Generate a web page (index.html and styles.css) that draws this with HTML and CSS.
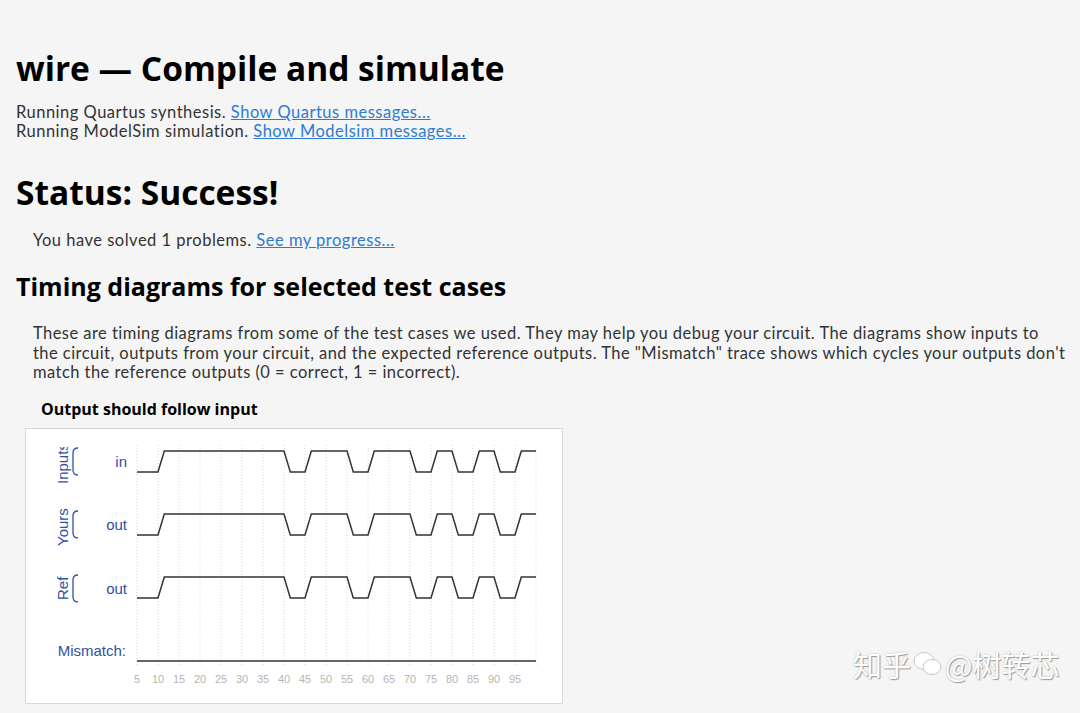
FILE: index.html
```html
<!DOCTYPE html>
<html lang="en">

<head>
    <meta charset="UTF-8">
    <title>wire — Compile and simulate</title>
    <link rel="stylesheet" href="styles.css">
</head>

<body>

    <h1 class="title">wire — Compile and simulate</h1>
    <p class="runs">
        Running Quartus synthesis. <a href="#">Show Quartus messages...</a><br>
        Running ModelSim simulation. <a href="#">Show Modelsim messages...</a>
    </p>

    <h1 class="status">Status: Success!</h1>
    <div class="indent">
        <p class="solved">You have solved 1 problems. <a href="#">See my progress...</a></p>
    </div>

    <h2>Timing diagrams for selected test cases</h2>
    <div class="indent">
        <p class="about">These are timing diagrams from some of the test cases we used. They may help you debug your circuit. The diagrams show inputs to<br>the circuit, outputs from your circuit, and the expected reference outputs. The "Mismatch" trace shows which cycles your outputs don't match the reference outputs (0 = correct, 1 = incorrect).</p>
    </div>

    <div class="figure">
        <h3>Output should follow input</h3>
        <div class="wave-box">
            <svg width="536" height="274" viewBox="0 0 536 274">
                <defs>
                    <clipPath id="labelClip">
                        <rect x="0" y="18" width="110" height="256"></rect>
                    </clipPath>
                    <path id="wave" d="M111,21 L132,21 L138.3,0 L258,0 L264.3,21 L279,21 L285.3,0 L321,0 L327.3,21 L342,21 L348.3,0 L384,0 L390.3,21 L405,21 L411.3,0 L426,0 L432.3,21 L447,21 L453.3,0 L468,0 L474.3,21 L489,21 L495.3,0 L510,0"></path>
                </defs>

                <!-- grid, one line every 5 cycles -->
                <g class="grid">
                    <line x1="111" y1="16" x2="111" y2="237"></line>
                    <line x1="132" y1="16" x2="132" y2="237"></line>
                    <line x1="153" y1="16" x2="153" y2="237"></line>
                    <line x1="174" y1="16" x2="174" y2="237"></line>
                    <line x1="195" y1="16" x2="195" y2="237"></line>
                    <line x1="216" y1="16" x2="216" y2="237"></line>
                    <line x1="237" y1="16" x2="237" y2="237"></line>
                    <line x1="258" y1="16" x2="258" y2="237"></line>
                    <line x1="279" y1="16" x2="279" y2="237"></line>
                    <line x1="300" y1="16" x2="300" y2="237"></line>
                    <line x1="321" y1="16" x2="321" y2="237"></line>
                    <line x1="342" y1="16" x2="342" y2="237"></line>
                    <line x1="363" y1="16" x2="363" y2="237"></line>
                    <line x1="384" y1="16" x2="384" y2="237"></line>
                    <line x1="405" y1="16" x2="405" y2="237"></line>
                    <line x1="426" y1="16" x2="426" y2="237"></line>
                    <line x1="447" y1="16" x2="447" y2="237"></line>
                    <line x1="468" y1="16" x2="468" y2="237"></line>
                    <line x1="489" y1="16" x2="489" y2="237"></line>
                    <line x1="510" y1="16" x2="510" y2="237"></line>
                </g>

                <!-- group labels -->
                <g class="labels" clip-path="url(#labelClip)">
                    <text class="group" transform="translate(42,55) rotate(-90)">Inputs</text>
                    <text class="group" transform="translate(42,117) rotate(-90)">Yours</text>
                    <text class="group" transform="translate(42,171) rotate(-90)">Ref</text>
                    <path class="brace" d="M52,19 Q47,19 47,24 L47,41 Q47,46 52,46"></path>
                    <path class="brace" d="M52,82 Q47,82 47,87 L47,104 Q47,109 52,109"></path>
                    <path class="brace" d="M52,146 Q47,146 47,151 L47,168 Q47,173 52,173"></path>
                    <text class="sig" x="101" y="38">in</text>
                    <text class="sig" x="101" y="101">out</text>
                    <text class="sig" x="101" y="165">out</text>
                    <text class="sig" x="100" y="227">Mismatch:</text>
                </g>

                <!-- traces -->
                <use class="trace" href="#wave" transform="translate(0,22)"></use>
                <use class="trace" href="#wave" transform="translate(0,85)"></use>
                <use class="trace" href="#wave" transform="translate(0,148)"></use>
                <line class="trace" x1="111" y1="232" x2="510" y2="232"></line>

                <!-- time axis -->
                <g class="axis">
                    <text x="111" y="254">5</text>
                    <text x="132" y="254">10</text>
                    <text x="153" y="254">15</text>
                    <text x="174" y="254">20</text>
                    <text x="195" y="254">25</text>
                    <text x="216" y="254">30</text>
                    <text x="237" y="254">35</text>
                    <text x="258" y="254">40</text>
                    <text x="279" y="254">45</text>
                    <text x="300" y="254">50</text>
                    <text x="321" y="254">55</text>
                    <text x="342" y="254">60</text>
                    <text x="363" y="254">65</text>
                    <text x="384" y="254">70</text>
                    <text x="405" y="254">75</text>
                    <text x="426" y="254">80</text>
                    <text x="447" y="254">85</text>
                    <text x="468" y="254">90</text>
                    <text x="489" y="254">95</text>
                </g>
            </svg>
        </div>
    </div>

    <div class="watermark">
        <span>知乎</span>
        <svg class="bubble" width="30" height="26" viewBox="0 0 30 26">
            <ellipse cx="11" cy="10" rx="10" ry="8.5"></ellipse>
            <ellipse cx="19" cy="16" rx="9" ry="7.5"></ellipse>
        </svg>
        <span>@树转芯</span>
    </div>

</body>

</html>
```

FILE: styles.css
```css
body {
    margin: 0;
    padding: 0 6px 0 16px;
    background-color: #f5f5f5;
    color: #333;
    font-family: Lato, "Open Sans", sans-serif;
    font-size: 16.5px;
    letter-spacing: 0.5px;
}

a {
    color: #2f7bcf;
}

h1,
h2,
h3 {
    font-family: "Open Sans", sans-serif;
    font-weight: 700;
    color: #000;
    margin: 0;
    letter-spacing: 0;
}

h1 {
    font-size: 33.5px;
    line-height: 40px;
}

.title {
    margin-top: 48px;
}

.runs {
    margin: 15px 0 0;
    line-height: 19px;
}

.status {
    margin-top: 31px;
}

.indent {
    padding-left: 17px;
}

.solved {
    margin: 19px 0 0;
    line-height: 19px;
}

h2 {
    font-size: 25px;
    line-height: 32px;
    margin-top: 20px;
}

.about {
    margin: 22px 0 0;
    line-height: 19.5px;
    letter-spacing: 0.45px;
}

.figure {
    margin: 15px 0 0 9px;
}

.figure h3 {
    font-size: 16px;
    line-height: 22px;
    padding-left: 16px;
    margin-bottom: 8px;
}

.wave-box {
    width: 536px;
    height: 274px;
    background-color: #fff;
    border: 1px solid #d8d8d8;
}

.wave-box svg {
    display: block;
    letter-spacing: 0;
}

.grid line {
    stroke: #d6d6d6;
    stroke-width: 1;
    stroke-dasharray: 1 2;
}

.trace {
    fill: none;
    stroke: #333;
    stroke-width: 1.5;
}

.labels text {
    font-family: "Liberation Sans", Arial, sans-serif;
    font-size: 15px;
    fill: #2f52a3;
}

.labels .sig {
    text-anchor: end;
}

.brace {
    fill: none;
    stroke: #2f52a3;
    stroke-width: 1.3;
}

.axis text {
    font-family: "Liberation Sans", Arial, sans-serif;
    font-size: 11px;
    fill: #b5b5b5;
    text-anchor: middle;
}

.watermark {
    position: absolute;
    left: 853px;
    top: 643px;
    display: flex;
    align-items: center;
    gap: 2px;
    font-family: "Noto Sans CJK SC", sans-serif;
    font-size: 29px;
    letter-spacing: 0;
    color: #fff;
    text-shadow: 1px 1px 1px #9a9a9a, 0 0 2px #bbb;
}

.bubble ellipse {
    fill: #fff;
    stroke: #c8c8c8;
    stroke-width: 1;
}
```
